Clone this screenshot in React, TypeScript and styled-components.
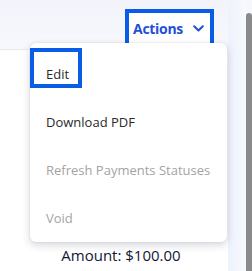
import React from 'react';
import styled, { createGlobalStyle } from 'styled-components';

const GlobalStyle = createGlobalStyle`
  html, body {
    margin: 0;
    padding: 0;
    background: #f6f7fc;
    font-family: "Open Sans", "Liberation Sans", sans-serif;
  }
`;

const Page = styled.div`
  display: flex;
  width: 252px;
  height: 271px;
  overflow: hidden;
`;

const Main = styled.div`
  position: relative;
  width: 228px;
  display: flex;
  flex-direction: column;
`;

const Header = styled.div`
  height: 49px;
  display: flex;
  justify-content: flex-end;
  align-items: flex-start;
  padding: 9px 14px 0 0;
  box-sizing: border-box;
  background: linear-gradient(180deg, #f3f4fb 0%, #f7f8fc 100%);
`;

const Outline = styled.div`
  border: 4px solid #0a5ce6;
  box-sizing: border-box;
`;

const ActionsButton = styled.button`
  display: flex;
  align-items: center;
  gap: 10px;
  height: 31px;
  padding: 0 6px 0 4px;
  border: 0;
  background: #fff;
  color: #1f4fd8;
  font-family: inherit;
  font-size: 14px;
  font-weight: 700;
  letter-spacing: -0.3px;
  cursor: pointer;
`;

const Card = styled.div`
  flex: 1;
  background: #fff;
  border-top: 1px solid #e8eaf2;
  display: flex;
  flex-direction: column;
  justify-content: flex-end;
  align-items: center;
  padding-bottom: 6px;
`;

const Amount = styled.div`
  font-size: 15px;
  color: #111833;
  margin-left: 14px;
`;

const Menu = styled.ul`
  position: absolute;
  top: 43px;
  left: 30px;
  width: 197px;
  margin: 0;
  padding: 7px 0 0;
  list-style: none;
  background: #fff;
  border-radius: 6px;
  box-shadow: 0 3px 8px rgba(20, 25, 60, 0.18), 0 0 2px rgba(20, 25, 60, 0.12);
`;

const Item = styled.li<{ $disabled?: boolean }>`
  height: 48px;
  display: flex;
  align-items: center;
  padding-left: 16px;
  font-size: 13px;
  color: ${(p) => (p.$disabled ? '#a3a3a3' : '#2a2a2a')};
`;

const EditBox = styled(Outline)`
  position: absolute;
  top: 5px;
  left: 0;
  width: 52px;
  height: 40px;
`;

const Side = styled.div`
  width: 18px;
  background: linear-gradient(90deg, #eef2fb 0%, #f7f9fe 100%);
`;

const Scrollbar = styled.div`
  width: 6px;
  margin-top: 13px;
  background: #8a8a8a;
  border-radius: 3px 3px 0 0;
`;

const Chevron = () => (
  <svg width="11" height="7" viewBox="0 0 11 7" fill="none">
    <path d="M1.2 1.2 L5.5 5.5 L9.8 1.2" stroke="#1f4fd8" strokeWidth="2" strokeLinecap="round" strokeLinejoin="round" />
  </svg>
);

const App = () => (
  <Page>
    <GlobalStyle />
    <Main>
      <Header>
        <Outline>
          <ActionsButton>
            Actions
            <Chevron />
          </ActionsButton>
        </Outline>
      </Header>
      <Card>
        <Amount>Amount: $100.00</Amount>
      </Card>
      <Menu>
        <EditBox />
        <Item>Edit</Item>
        <Item>Download PDF</Item>
        <Item $disabled>Refresh Payments Statuses</Item>
        <Item $disabled>Void</Item>
      </Menu>
    </Main>
    <Side />
    <Scrollbar />
  </Page>
);

export default App;
